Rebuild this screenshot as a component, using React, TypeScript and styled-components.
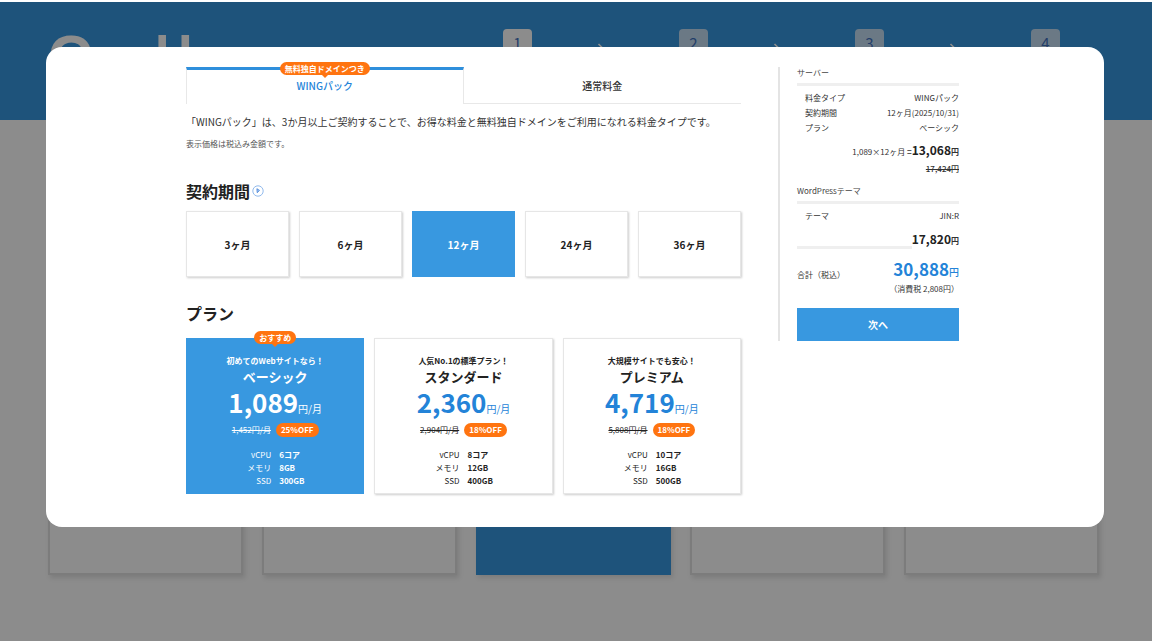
import { useState } from "react";
import styled, { createGlobalStyle, css } from "styled-components";

type Plan = {
  id: string;
  catch: string;
  name: string;
  price: string;
  regular: string;
  off: string;
  cpu: string;
  memory: string;
  ssd: string;
  recommended?: boolean;
};

const steps = ["1", "2", "3", "4"];

const periods = ["3", "6", "12", "24", "36"];

const plans: Plan[] = [
  {
    id: "basic",
    catch: "初めてのWebサイトなら！",
    name: "ベーシック",
    price: "1,089",
    regular: "1,452円/月",
    off: "25%OFF",
    cpu: "6コア",
    memory: "8GB",
    ssd: "300GB",
    recommended: true,
  },
  {
    id: "standard",
    catch: "人気No.1の標準プラン！",
    name: "スタンダード",
    price: "2,360",
    regular: "2,904円/月",
    off: "18%OFF",
    cpu: "8コア",
    memory: "12GB",
    ssd: "400GB",
  },
  {
    id: "premium",
    catch: "大規模サイトでも安心！",
    name: "プレミアム",
    price: "4,719",
    regular: "5,808円/月",
    off: "18%OFF",
    cpu: "10コア",
    memory: "16GB",
    ssd: "500GB",
  },
];

const App = () => {
  const [tab, setTab] = useState("wing");
  const [period, setPeriod] = useState("12");
  const [plan, setPlan] = useState("basic");

  return (
    <>
      <GlobalStyle />
      <Page>
        <Header>
          <Logo />
          <Steps>
            {steps.map((step, i) => (
              <Step key={step}>
                <StepNumber $current={i === 0}>{step}</StepNumber>
                {i < steps.length - 1 && <StepArrow />}
              </Step>
            ))}
          </Steps>
        </Header>
        <Backdrop>
          {periods.map((p) => (
            <BackdropCard key={p} $selected={p === "12"} />
          ))}
        </Backdrop>

        <Overlay>
          <Modal role="dialog" aria-modal="true">
            <Content>
              <Tabs role="tablist">
                <Tab role="tab" $selected={tab === "wing"} aria-selected={tab === "wing"} onClick={() => setTab("wing")}>
                  <Badge>無料独自ドメインつき</Badge>
                  WINGパック
                </Tab>
                <Tab role="tab" $selected={tab === "normal"} aria-selected={tab === "normal"} onClick={() => setTab("normal")}>
                  通常料金
                </Tab>
              </Tabs>
              <Lead>
                「WINGパック」は、3か月以上ご契約することで、お得な料金と無料独自ドメインをご利用になれる料金タイプです。
              </Lead>
              <Note>表示価格は税込み金額です。</Note>

              <Heading>
                契約期間
                <HelpButton type="button">
                  <HelpIcon />
                </HelpButton>
              </Heading>
              <Periods>
                {periods.map((p) => (
                  <PeriodCard key={p} $selected={p === period}>
                    <HiddenRadio type="radio" name="period" checked={p === period} onChange={() => setPeriod(p)} />
                    {p}ヶ月
                  </PeriodCard>
                ))}
              </Periods>

              <Heading>プラン</Heading>
              <Plans>
                {plans.map((p) => (
                  <PlanItem key={p.id} plan={p} selected={p.id === plan} onSelect={() => setPlan(p.id)} />
                ))}
              </Plans>
            </Content>

            <Summary>
              <SummaryTitle>サーバー</SummaryTitle>
              <Details>
                <dt>料金タイプ</dt>
                <dd>WINGパック</dd>
                <dt>契約期間</dt>
                <dd>12ヶ月(2025/10/31)</dd>
                <dt>プラン</dt>
                <dd>ベーシック</dd>
              </Details>
              <Subtotal>
                1,089×12ヶ月 <b>=</b>
                <strong>13,068</strong>
                <b>円</b>
              </Subtotal>
              <RegularTotal>17,424円</RegularTotal>

              <SummaryTitle>WordPressテーマ</SummaryTitle>
              <Details>
                <dt>テーマ</dt>
                <dd>JIN:R</dd>
              </Details>
              <ThemeTotal>
                <span>
                  <strong>17,820</strong>
                  <b>円</b>
                </span>
              </ThemeTotal>

              <Total>
                <span>合計（税込）</span>
                <TotalPrice>
                  30,888<small>円</small>
                </TotalPrice>
              </Total>
              <Tax>（消費税 2,808円）</Tax>
              <NextButton type="button">次へ</NextButton>
            </Summary>
          </Modal>
        </Overlay>
      </Page>
    </>
  );
};

const PlanItem = ({ plan, selected, onSelect }: { plan: Plan; selected: boolean; onSelect: () => void }) => {
  return (
    <PlanCard $selected={selected}>
      <HiddenRadio type="radio" name="plan" checked={selected} onChange={onSelect} />
      {plan.recommended && <Badge>おすすめ</Badge>}
      <PlanCatch>{plan.catch}</PlanCatch>
      <PlanName>{plan.name}</PlanName>
      <PlanPrice $selected={selected}>
        {plan.price}
        <small>円/月</small>
      </PlanPrice>
      <Discount>
        <s>{plan.regular}</s>
        <Off>{plan.off}</Off>
      </Discount>
      <Specs>
        <span>vCPU</span>
        <b>{plan.cpu}</b>
        <span>メモリ</span>
        <b>{plan.memory}</b>
        <span>SSD</span>
        <b>{plan.ssd}</b>
      </Specs>
    </PlanCard>
  );
};

const Logo = () => (
  <LogoSvg viewBox="0 0 300 60" role="img" aria-label="ConoHa WING">
    <text x="0" y="46" fontSize="61">C</text>
    <text x="44" y="44" fontSize="34">ono</text>
    <text x="107" y="39" fontSize="52">H</text>
    <text x="146" y="44" fontSize="34">a</text>
  </LogoSvg>
);

const StepArrow = () => (
  <ArrowSvg viewBox="0 0 8 12">
    <path d="M1.5 1 6.5 6l-5 5" fill="none" stroke="#fff" strokeWidth="1.6" />
  </ArrowSvg>
);

const HelpIcon = () => (
  <svg width="12" height="12" viewBox="0 0 12 12">
    <circle cx="6" cy="6" r="5.2" fill="#fff" stroke="#86b2ea" strokeWidth="0.9" />
    <path d="M4.9 3.7 7.5 5.4 5.2 7.7Z" fill="#a9c8f2" stroke="#3f7fd6" strokeWidth="0.8" />
  </svg>
);

const GlobalStyle = createGlobalStyle`
  *, *::before, *::after {
    box-sizing: border-box;
  }

  body {
    margin: 0;
    background: #fff;
    color: #333;
    font-family: "Noto Sans CJK JP", sans-serif;
    font-size: 8px;
  }

  h1, h2, p, dl, dd {
    margin: 0;
  }

  button {
    font-family: inherit;
    cursor: pointer;
  }
`;

const Page = styled.div`
  position: relative;
  display: flex;
  flex-direction: column;
  min-height: 100vh;
  padding-top: 2px;
`;

const Header = styled.header`
  display: flex;
  justify-content: space-between;
  height: 118px;
  padding: 27px 92px 0 48px;
  background: #3898e0;
`;

const LogoSvg = styled.svg`
  width: 300px;
  height: 60px;
  margin-top: 3px;
  fill: #fff;
  font-family: "Liberation Sans", sans-serif;
  font-weight: 700;
`;

const Steps = styled.div`
  display: flex;
`;

const Step = styled.div`
  display: flex;
  width: 176px;

  &:last-child {
    width: 29px;
  }
`;

const StepNumber = styled.div<{ $current: boolean }>`
  width: 29px;
  height: 29px;
  border-radius: 4px;
  background: ${(p) => (p.$current ? "#fff" : "#c3ddf3")};
  color: #3f72c0;
  font-size: 15px;
  line-height: 28px;
  text-align: center;
`;

const ArrowSvg = styled.svg`
  width: 8px;
  height: 12px;
  margin: 14px 0 0 65px;
`;

const Backdrop = styled.div`
  flex: 1;
  display: grid;
  grid-template-columns: repeat(5, 1fr);
  align-items: end;
  gap: 19px;
  padding: 0 53px 66px 48px;
`;

const BackdropCard = styled.div<{ $selected: boolean }>`
  height: 180px;
  border: 2px solid ${(p) => (p.$selected ? "#3898e0" : "#e2e2e2")};
  background: ${(p) => (p.$selected ? "#3898e0" : "#fff")};
  box-shadow: 2px 3px 5px rgba(0, 0, 0, 0.12);
`;

const Overlay = styled.div`
  position: absolute;
  inset: 2px 0 0;
  padding: 45px 48px 0 46px;
  background: rgba(0, 0, 0, 0.45);
`;

const Modal = styled.div`
  display: grid;
  grid-template-columns: minmax(0, 1fr) 181px;
  align-items: start;
  gap: 37px;
  padding: 20px 145px 33px 140px;
  border-radius: 16px;
  background: #fff;
`;

const Content = styled.div`
  min-width: 0;
`;

const Tabs = styled.div`
  display: grid;
  grid-template-columns: 1fr 1fr;
`;

const Tab = styled.button<{ $selected: boolean }>`
  position: relative;
  height: 37px;
  padding: 0;
  border: 0 solid #e8e8e8;
  background: none;
  color: #333;
  font-size: 10px;
  font-weight: 500;
  line-height: 16px;

  ${(p) =>
    p.$selected
      ? css`
          padding-bottom: 2px;
          border-width: 3px 1px 0;
          border-top-color: #2f8fdc;
          color: #2383d8;
        `
      : css`
          padding-top: 2px;
          border-width: 0 0 1px;
        `}
`;

const Badge = styled.span`
  position: absolute;
  top: -8px;
  left: 50%;
  padding: 0 5px;
  border-radius: 7px;
  transform: translateX(-50%);
  background: #ff7410;
  color: #fff;
  font-size: 8px;
  font-weight: 700;
  line-height: 13px;
  white-space: nowrap;

  &::after {
    content: "";
    position: absolute;
    top: 12px;
    left: 50%;
    margin-left: -4px;
    border: 4px solid transparent;
    border-bottom: 0;
    border-top-color: #ff7410;
  }
`;

const Lead = styled.p`
  margin-top: 10px;
  font-size: 10px;
  line-height: 16px;
`;

const Note = styled.p`
  margin-top: 8px;
  color: #555;
  line-height: 12px;
`;

const Heading = styled.h2`
  display: flex;
  align-items: center;
  gap: 2px;
  margin-top: 29px;
  color: #222;
  font-size: 16px;
  font-weight: 700;
  line-height: 24px;
`;

const HelpButton = styled.button`
  display: flex;
  padding: 0;
  border: 0;
  background: none;
`;

const HiddenRadio = styled.input`
  position: absolute;
  opacity: 0;
  pointer-events: none;
`;

const Periods = styled.div`
  display: grid;
  grid-template-columns: repeat(5, 1fr);
  gap: 10px;
  margin: 8px 0 -5px;
`;

const card = css<{ $selected: boolean }>`
  border: 1px solid ${(p) => (p.$selected ? "#3898e0" : "#e6e6e6")};
  background: ${(p) => (p.$selected ? "#3898e0" : "#fff")};
  box-shadow: ${(p) => (p.$selected ? "none" : "1px 1px 2px rgba(0, 0, 0, 0.2)")};
  color: ${(p) => (p.$selected ? "#fff" : "#222")};
  cursor: pointer;
`;

const PeriodCard = styled.label<{ $selected: boolean }>`
  ${card}
  position: relative;
  display: flex;
  align-items: center;
  justify-content: center;
  height: 66px;
  font-size: 10px;
  font-weight: 700;
`;

const Plans = styled.div`
  display: grid;
  grid-template-columns: repeat(3, 1fr);
  gap: 10px;
  margin-top: 13px;
`;

const PlanCard = styled.label<{ $selected: boolean }>`
  ${card}
  position: relative;
  display: flex;
  flex-direction: column;
  align-items: center;
  padding: 16px 0 6px;
`;

const PlanCatch = styled.span`
  font-weight: 700;
  line-height: 12px;
`;

const PlanName = styled.span`
  font-size: 13px;
  font-weight: 700;
  line-height: 19px;
`;

const PlanPrice = styled.span<{ $selected: boolean }>`
  color: ${(p) => (p.$selected ? "#fff" : "#2383d8")};
  font-size: 26px;
  font-weight: 700;
  line-height: 32px;

  small {
    font-size: 10px;
    font-weight: 400;
    line-height: 1;
  }
`;

const Discount = styled.span`
  display: flex;
  align-items: center;
  gap: 5px;
  margin-top: 5px;
  line-height: 14px;
`;

const Off = styled.span`
  padding: 0 5px;
  border-radius: 7px;
  background: #ff7410;
  color: #fff;
  font-weight: 700;
`;

const Specs = styled.span`
  display: grid;
  grid-template-columns: 1fr 1fr;
  column-gap: 8px;
  width: 100%;
  margin-top: 11px;
  line-height: 13px;

  span {
    text-align: right;
  }
`;

const Summary = styled.aside`
  padding-left: 17px;
  border-left: 2px solid #e4e4e4;
  line-height: 12px;
`;

const SummaryTitle = styled.h2`
  padding-bottom: 4px;
  border-bottom: 3px solid #efefef;
  color: #444;
  font-size: 8px;
  font-weight: 400;
  line-height: 12px;
`;

const Details = styled.dl`
  display: grid;
  grid-template-columns: auto 1fr;
  padding: 4px 0 0 8px;
  line-height: 15px;

  dd {
    text-align: right;
  }
`;

const amount = css`
  strong {
    color: #222;
    font-size: 12px;
    line-height: 1;
  }

  b {
    line-height: 1;
  }
`;

const Subtotal = styled.p`
  ${amount}
  margin-top: 8px;
  line-height: 18px;
  text-align: right;
`;

const RegularTotal = styled.p`
  margin: 2px 0 10px;
  font-weight: 500;
  text-align: right;
  text-decoration: line-through;
`;

const ThemeTotal = styled.p`
  ${amount}
  display: flex;
  align-items: flex-end;
  margin-top: 10px;

  /* rule that runs up to the price */
  &::before {
    content: "";
    flex: 1;
    height: 3px;
    background: #efefef;
  }

  span {
    line-height: 16px;
  }
`;

const Total = styled.div`
  display: flex;
  align-items: flex-end;
  justify-content: space-between;
  margin-top: 8px;
`;

const TotalPrice = styled.span`
  color: #2383d8;
  font-size: 17px;
  font-weight: 700;
  line-height: 24px;

  small {
    font-size: 10px;
    font-weight: 500;
    line-height: 1;
  }
`;

const Tax = styled.p`
  margin-top: 2px;
  text-align: right;
`;

const NextButton = styled.button`
  width: 100%;
  height: 33px;
  margin-top: 13px;
  padding: 0;
  border: 0;
  background: #3898e0;
  color: #fff;
  font-size: 10px;
  font-weight: 700;
`;

export default App;
